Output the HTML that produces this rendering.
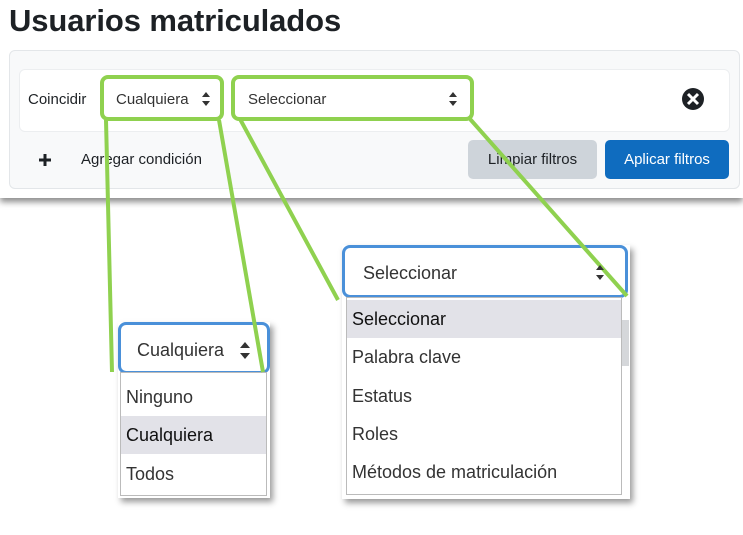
<!DOCTYPE html>
<html><head><meta charset="utf-8"><style>
body{margin:0;width:743px;height:535px;background:#fff;position:relative;overflow:hidden;font-family:"Liberation Sans","DejaVu Sans",sans-serif;color:#1d2125}
.a{position:absolute}
.t{font-size:15px;line-height:20px}
.item{position:absolute;left:0;right:0;height:38px;line-height:38px;padding-left:5px;font-size:18px;color:#333}
</style></head><body>
<div class="a" style="left:0;top:0;width:743px;height:198px;background:#fff;box-shadow:0 4px 6px rgba(0,0,0,.45)"></div>
<div class="a" style="left:9px;top:3px;font-size:31px;font-weight:bold;letter-spacing:-0.1px">Usuarios matriculados</div>
<div class="a" style="left:9px;top:50px;width:729px;height:137px;background:#f8f9fa;border:1px solid #e3e6e9;border-radius:6px"></div>
<div class="a" style="left:19px;top:69px;width:709px;height:61px;background:#fff;border:1px solid #eceef0;border-radius:6px"></div>
<div class="a t" style="left:28px;top:90px">Coincidir</div>
<div class="a t" style="left:116px;top:90px;color:#333">Cualquiera</div>
<div class="a t" style="left:248px;top:90px;color:#333">Seleccionar</div>
<svg class="a" style="left:0;top:0" width="743" height="535">
<g fill="#333"><path d="M202 97l4-5 4 5z M202 101l4 5 4-5z"/><path d="M449 97l4-5 4 5z M449 101l4 5 4-5z"/></g>
<circle cx="693" cy="99" r="11" fill="#1d2125"/>
<path d="M688 94l10 10M698 94l-10 10" stroke="#fff" stroke-width="3"/>
<path d="M45 154v12M39 160h12" stroke="#1d2125" stroke-width="3"/>
</svg>
<div class="a t" style="left:81px;top:150px">Agregar condición</div>
<div class="a t" style="left:468px;top:140px;width:129px;height:39px;line-height:39px;text-align:center;background:#ced4da;border-radius:5px">Limpiar filtros</div>
<div class="a t" style="left:605px;top:140px;width:124px;height:39px;line-height:39px;text-align:center;background:#0f6cbf;color:#fff;border-radius:5px">Aplicar filtros</div>

<div class="a" style="left:118px;top:322px;width:152px;height:176px;box-shadow:3px 4px 6px rgba(0,0,0,.4);background:#fff"></div>
<div class="a" style="left:118px;top:322px;width:146px;height:46px;border:3px solid #4a90d9;border-radius:8px;background:#fff"></div>
<div class="a" style="left:137px;top:340px;font-size:18px;color:#333">Cualquiera</div>
<div class="a" style="left:120px;top:372px;width:145px;height:122px;border:1px solid #bbb;background:#fff">
<div class="item" style="top:5px">Ninguno</div>
<div class="item" style="top:43px;background:#e2e2e8;color:#111">Cualquiera</div>
<div class="item" style="top:82px">Todos</div>
</div>
<div class="a" style="left:342px;top:245px;width:288px;height:254px;box-shadow:3px 4px 6px rgba(0,0,0,.4);background:#fff"></div>
<div class="a" style="left:621px;top:320px;width:8px;height:46px;background:#d5d7da"></div>
<div class="a" style="left:342px;top:245px;width:280px;height:47px;border:3px solid #4a90d9;border-radius:8px;background:#fff"></div>
<div class="a" style="left:363px;top:263px;font-size:18px;color:#333">Seleccionar</div>
<div class="a" style="left:346px;top:297px;width:274px;height:196px;border:1px solid #bbb;background:#fff">
<div class="item" style="top:2px;background:#e2e2e8;color:#111">Seleccionar</div>
<div class="item" style="top:40px">Palabra clave</div>
<div class="item" style="top:79px">Estatus</div>
<div class="item" style="top:117px">Roles</div>
<div class="item" style="top:155px">Métodos de matriculación</div>
</div>
<svg class="a" style="left:0;top:0" width="743" height="535">
<g fill="none" stroke="#8fd14f" stroke-width="4">
<rect x="102" y="77" width="120" height="42" rx="6"/>
<rect x="233" y="77" width="239" height="42" rx="6"/>
<path d="M106 120L112 372M219 120L263 372M240 119L338 300M470 119L627 296"/>
</g>
<path d="M240 348l5-6 5 6zM240 353l5 6 5-6z" fill="#333"/>
<path d="M596 270l4-5 4 5zM596 275l4 5 4-5z" fill="#333"/>
</svg>
</body></html>
